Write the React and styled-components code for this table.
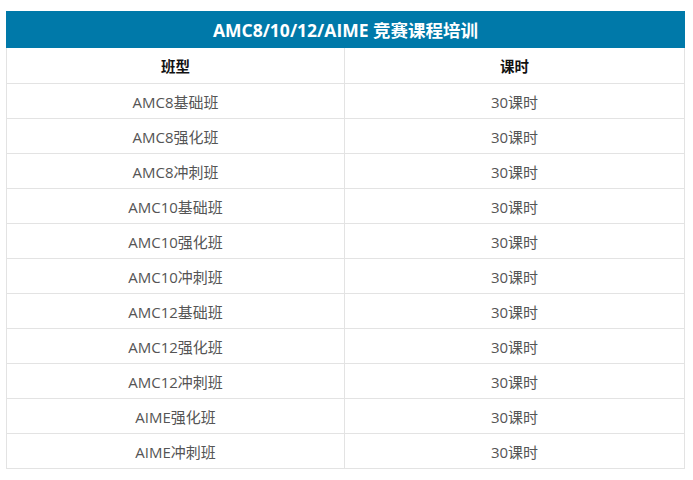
import React from 'react';
import styled, { createGlobalStyle } from 'styled-components';

const GlobalStyle = createGlobalStyle`
  html, body {
    margin: 0;
    padding: 0;
    background: #fff;
  }
  body {
    font-family: "Open Sans", "Noto Sans CJK SC", sans-serif;
  }
`;

const Page = styled.div`
  padding: 11px 8px 0 6px;
`;

const Table = styled.table`
  width: 679px;
  border-collapse: collapse;
  table-layout: fixed;
  font-size: 15px;
`;

const TitleCell = styled.th`
  height: 35px;
  padding: 0;
  background: #0079a9;
  border: 1px solid #0079a9;
  color: #fff;
  font-size: 17.5px;
  font-weight: 700;
  text-align: center;
`;

const HeadCell = styled.th`
  height: 35px;
  padding: 0;
  border: 1px solid #e3e3e3;
  color: #111;
  font-size: 14.5px;
  font-weight: 700;
  text-align: center;
`;

const Cell = styled.td`
  height: 34px;
  padding: 0;
  border: 1px solid #e3e3e3;
  color: #555;
  text-align: center;
`;

const courses = [
  'AMC8基础班',
  'AMC8强化班',
  'AMC8冲刺班',
  'AMC10基础班',
  'AMC10强化班',
  'AMC10冲刺班',
  'AMC12基础班',
  'AMC12强化班',
  'AMC12冲刺班',
  'AIME强化班',
  'AIME冲刺班',
];

const App = () => {
  return (
    <Page>
      <GlobalStyle />
      <Table>
        <colgroup>
          <col style={{ width: '338px' }} />
          <col />
        </colgroup>
        <thead>
          <tr>
            <TitleCell colSpan={2}>AMC8/10/12/AIME 竞赛课程培训</TitleCell>
          </tr>
          <tr>
            <HeadCell>班型</HeadCell>
            <HeadCell>课时</HeadCell>
          </tr>
        </thead>
        <tbody>
          {courses.map((name) => (
            <tr key={name}>
              <Cell>{name}</Cell>
              <Cell>30课时</Cell>
            </tr>
          ))}
        </tbody>
      </Table>
    </Page>
  );
};

export default App;
